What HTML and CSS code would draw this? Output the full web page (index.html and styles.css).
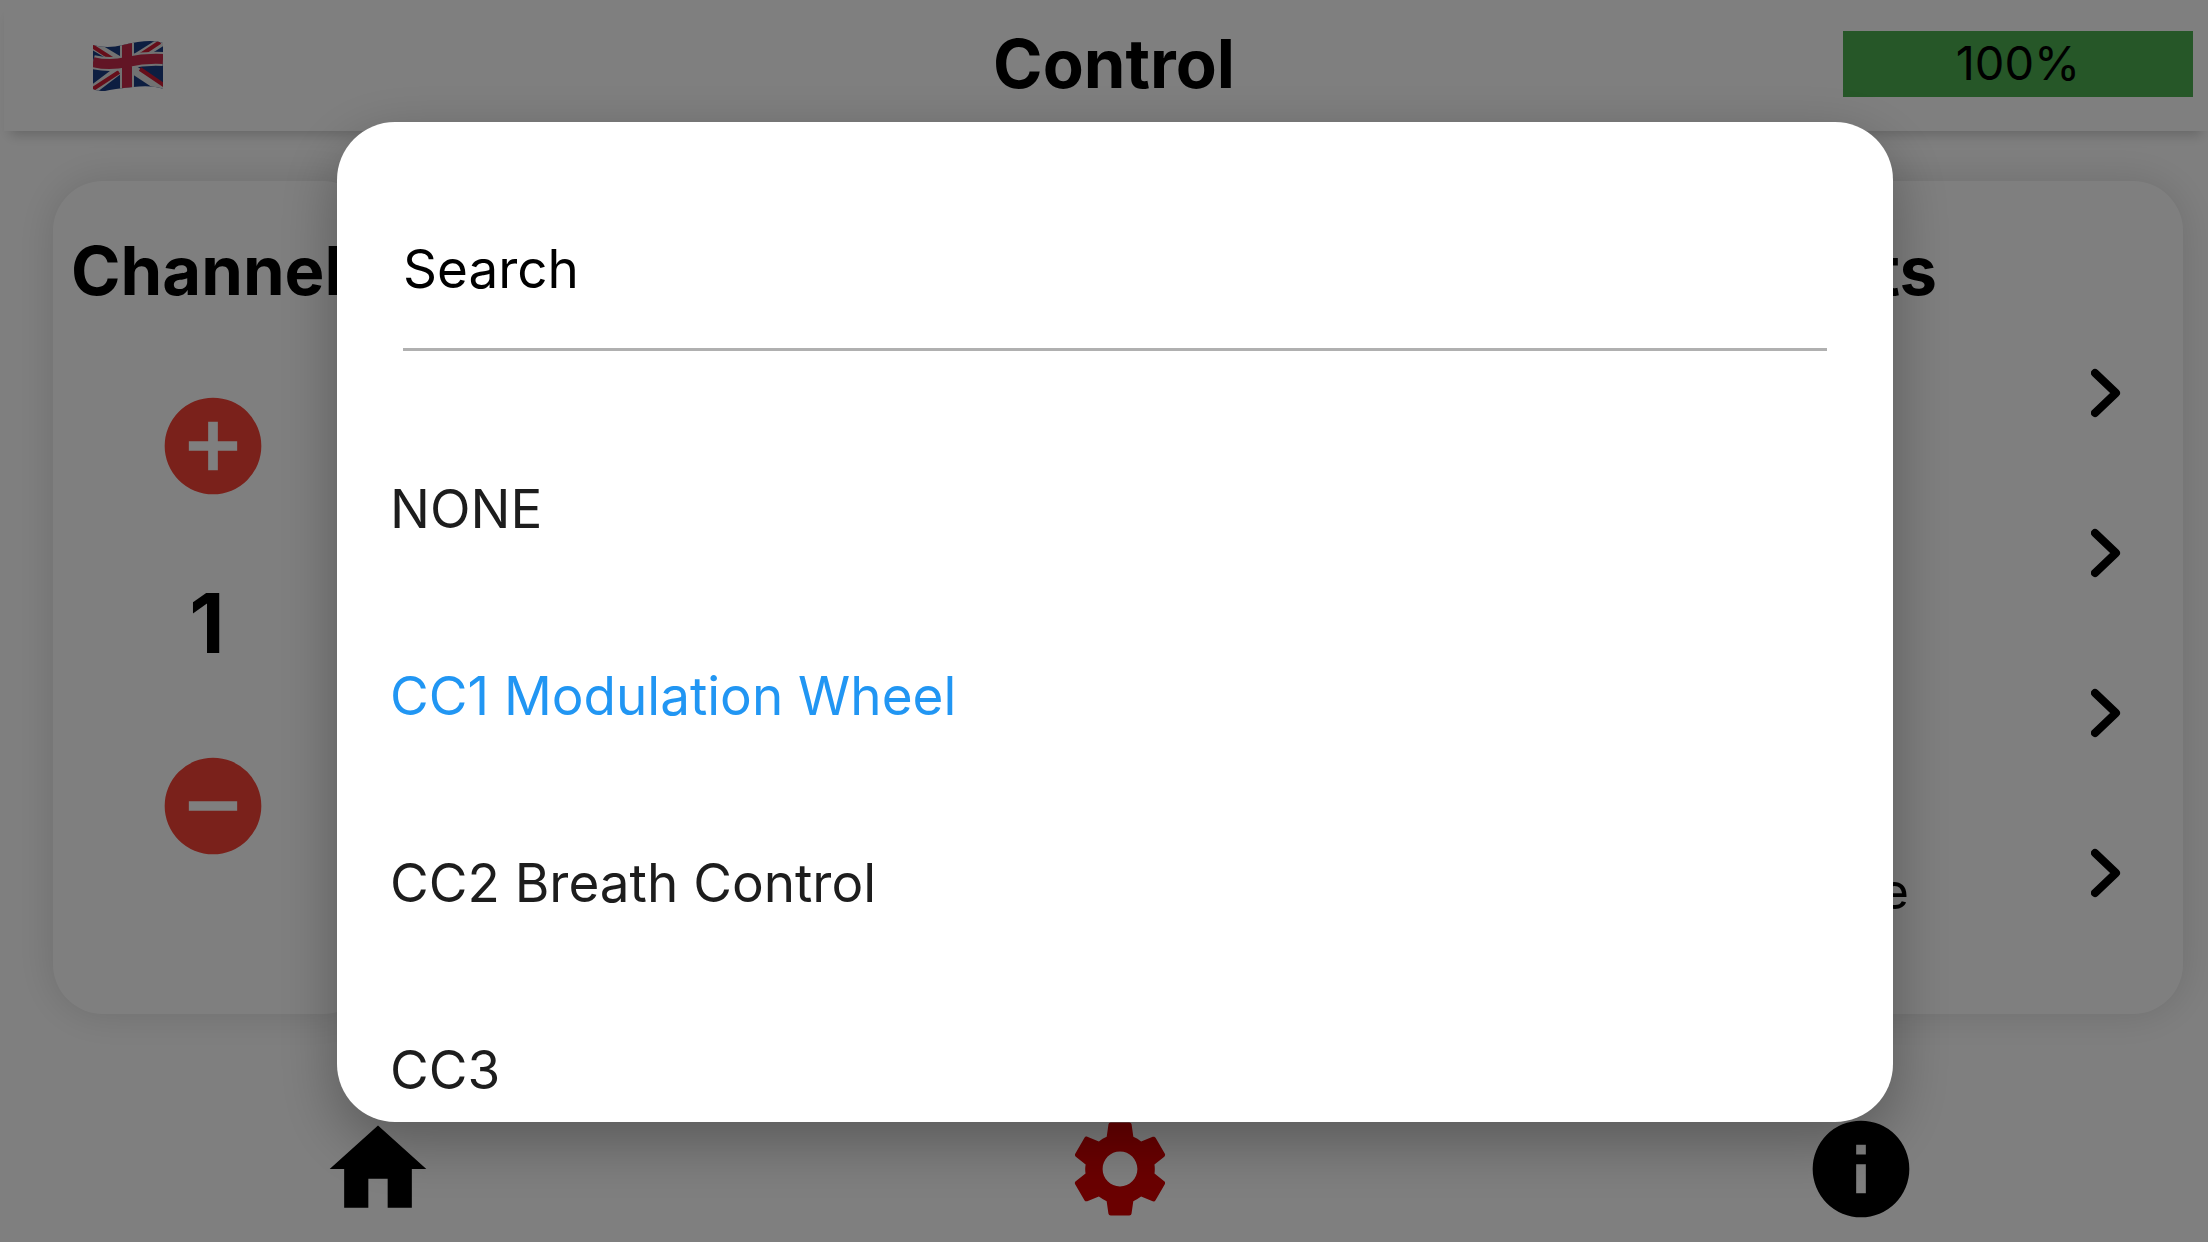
FILE: index.html
```html
<!DOCTYPE html>
<html lang="en">
<head>
<meta charset="utf-8">
<meta name="viewport" content="width=device-width, initial-scale=1">
<title>Control</title>
<link rel="stylesheet" href="styles.css">
</head>
<body>
<div class="app">
  <header class="topbar">
    <button class="language" type="button" aria-label="Language: English">
      <svg class="flag" viewBox="0 0 70 50" aria-hidden="true">
        <defs>
          <clipPath id="cloth"><path d="M0 4Q14 8 30 4T57 0Q65 0 70 2V48Q60 44 40 46T12 50Q4 50 0 48Z"/></clipPath>
        </defs>
        <g clip-path="url(#cloth)">
          <rect width="70" height="50" fill="#1b3c82"/>
          <path d="M-2 3L35 25L70 48M-2 50L35 22L70 0" stroke="#e4e4e4" stroke-width="9" fill="none"/>
          <path d="M-1 5L21 19M0 48L26 31M43 17L67 1M47 28L72 45" stroke="#cc1c34" stroke-width="4"/>
          <path d="M0 21Q16 25 34 21T70 18M34 0V50" stroke="#e4e4e4" stroke-width="14" fill="none"/>
          <path d="M0 21Q16 25 34 21T70 18M34 0V50" stroke="#c42a4a" stroke-width="10" fill="none"/>
        </g>
      </svg>
    </button>
    <h1 class="title">Control</h1>
    <div class="battery">100%</div>
  </header>

  <main class="cards">
    <section class="card channel">
      <h2 class="card-title">Channel</h2>
      <div class="stepper">
        <button class="step" type="button" aria-label="Next channel">
          <svg class="icon" viewBox="0 0 24 24" aria-hidden="true"><path d="M12 2a10 10 0 1 0 0 20 10 10 0 0 0 0-20zm5 11h-4v4h-2v-4H7v-2h4V7h2v4h4z"/></svg>
        </button>
        <output class="value">1</output>
        <button class="step" type="button" aria-label="Previous channel">
          <svg class="icon" viewBox="0 0 24 24" aria-hidden="true"><path d="M12 2a10 10 0 1 0 0 20 10 10 0 0 0 0-20zm5 11H7v-2h10z"/></svg>
        </button>
      </div>
    </section>
    <section class="card inputs">
      <h2 class="card-title">Inputs</h2>
      <ul class="rows">
        <li class="row"><button class="open" type="button" aria-label="Open"><svg class="chevron" viewBox="0 0 30 50" aria-hidden="true"><path d="M4 5L25 25L4 45"/></svg></button></li>
        <li class="row"><button class="open" type="button" aria-label="Open"><svg class="chevron" viewBox="0 0 30 50" aria-hidden="true"><path d="M4 5L25 25L4 45"/></svg></button></li>
        <li class="row"><button class="open" type="button" aria-label="Open"><svg class="chevron" viewBox="0 0 30 50" aria-hidden="true"><path d="M4 5L25 25L4 45"/></svg></button></li>
        <li class="row"><span class="row-label">None</span><button class="open" type="button" aria-label="Open"><svg class="chevron" viewBox="0 0 30 50" aria-hidden="true"><path d="M4 5L25 25L4 45"/></svg></button></li>
      </ul>
    </section>
  </main>

  <nav class="tabs">
    <a class="tab" href="#home" aria-label="Home"><svg class="icon" viewBox="0 0 24 24" aria-hidden="true"><path d="M10 20v-6h4v6h5v-8h3L12 3 2 12h3v8z"/></svg></a>
    <a class="tab active" href="#control" aria-label="Control"><svg class="icon" viewBox="0 0 24 24" aria-hidden="true"><path d="M19.14 12.94c.04-.3.06-.61.06-.94 0-.32-.02-.64-.07-.94l2.03-1.58c.18-.14.23-.41.12-.61l-1.92-3.32c-.12-.22-.37-.29-.59-.22l-2.39.96c-.5-.38-1.03-.7-1.62-.94l-.36-2.54c-.04-.24-.24-.41-.48-.41h-3.84c-.24 0-.43.17-.47.41l-.36 2.54c-.59.24-1.13.57-1.62.94l-2.39-.96c-.22-.08-.47 0-.59.22L2.74 8.87c-.12.21-.08.47.12.61l2.03 1.58c-.05.3-.09.63-.09.94s.02.64.07.94l-2.03 1.58c-.18.14-.23.41-.12.61l1.92 3.32c.12.22.37.29.59.22l2.39-.96c.5.38 1.03.7 1.62.94l.36 2.54c.05.24.24.41.48.41h3.84c.24 0 .44-.17.47-.41l.36-2.54c.59-.24 1.13-.56 1.62-.94l2.39.96c.22.08.47 0 .59-.22l1.92-3.32c.12-.22.07-.47-.12-.61l-2.01-1.58zM12 15.6c-1.98 0-3.6-1.62-3.6-3.6s1.62-3.6 3.6-3.6 3.6 1.62 3.6 3.6-1.62 3.6-3.6 3.6z"/></svg></a>
    <a class="tab" href="#about" aria-label="About"><svg class="icon" viewBox="0 0 24 24" aria-hidden="true"><path d="M12 2a10 10 0 1 0 0 20 10 10 0 0 0 0-20zm1 15h-2v-6h2zm0-8h-2V7h2z"/></svg></a>
  </nav>
</div>

<div class="overlay">
  <div class="dialog" role="dialog" aria-modal="true" aria-label="Select a controller">
    <input class="search" type="text" placeholder="Search" aria-label="Search">
    <ul class="options">
      <li><button class="option" type="button">NONE</button></li>
      <li><button class="option selected" type="button">CC1 Modulation Wheel</button></li>
      <li><button class="option" type="button">CC2 Breath Control</button></li>
      <li><button class="option" type="button">CC3</button></li>
    </ul>
  </div>
</div>
</body>
</html>
```
FILE: styles.css
```css
*,
*::before,
*::after {
  box-sizing: border-box;
}

body {
  margin: 0;
  background: #fff;
  color: #000;
  font-family: Inter, "Liberation Sans", sans-serif;
}

button {
  display: block;
  margin: 0;
  padding: 0;
  border: 0;
  background: none;
  color: inherit;
  font: inherit;
}

ul {
  margin: 0;
  padding: 0;
  list-style: none;
}

svg {
  display: block;
}

.app {
  display: flex;
  flex-direction: column;
  height: 100vh;
  overflow: hidden;
}

.topbar {
  display: grid;
  grid-template-columns: 1fr auto 1fr;
  align-items: center;
  height: 131px;
  margin-left: 4px;
  padding: 0 15px 3px 31px;
  box-shadow: 0 10px 12px -6px rgba(0, 0, 0, 0.2);
}

.language {
  justify-self: start;
  margin-left: 58px;
  padding-top: 4px;
}

.flag {
  width: 70px;
  height: 50px;
}

.title {
  margin: 0;
  font-size: 67px;
  font-weight: 700;
  line-height: 80px;
}

.battery {
  justify-self: end;
  width: 350px;
  height: 66px;
  background: #4caf50;
  font-size: 47px;
  font-weight: 400;
  line-height: 64px;
  text-align: center;
}

.cards {
  display: flex;
  flex: 1;
  gap: 40px;
  padding: 50px 25px 0 53px;
}

.card {
  border-radius: 50px;
  background: #fff;
  box-shadow: 0 0 40px rgba(0, 0, 0, 0.14);
}

.channel {
  width: 320px;
  padding: 50px 18px 0;
}

.inputs {
  flex: 1;
  padding: 50px 52px 0;
}

.card-title {
  margin: 0;
  font-size: 67px;
  font-weight: 700;
  line-height: 80px;
}

.inputs .card-title {
  padding-right: 194px;
  text-align: right;
}

.stepper {
  display: flex;
  flex-direction: column;
  align-items: center;
  gap: 74px;
  padding-top: 77px;
}

.icon {
  width: 116px;
  height: 116px;
  fill: currentColor;
}

.step {
  color: #f44336;
}

.value {
  padding: 0 12px 4px 0;
  font-size: 82px;
  font-weight: 700;
  line-height: 92px;
}

.rows {
  padding-top: 2px;
}

.row {
  display: flex;
  align-items: center;
  justify-content: flex-end;
  height: 160px;
}

.row-label {
  padding: 35px 182px 0 0;
  font-size: 50px;
  font-weight: 400;
}

.open {
  padding-right: 10px;
}

.chevron {
  width: 30px;
  height: 50px;
  fill: none;
  stroke: #000;
  stroke-width: 8;
  stroke-linecap: round;
  stroke-linejoin: round;
}

.tabs {
  display: flex;
  justify-content: space-between;
  margin-top: 97px;
  padding: 0 289px 15px 320px;
}

.tab {
  color: #000;
}

.tab.active {
  color: #d50000;
}

.overlay {
  position: fixed;
  inset: 0;
  padding: 122px 315px 120px 337px;
  background: rgba(0, 0, 0, 0.5);
}

.dialog {
  height: 100%;
  padding: 76px 66px 0;
  overflow: hidden;
  border-radius: 58px;
  background: #fff;
  box-shadow: 0 20px 60px rgba(0, 0, 0, 0.3);
}

.search {
  display: block;
  width: 100%;
  height: 153px;
  padding: 0 0 8px;
  border: 0;
  border-bottom: 3px solid #b0b0b0;
  outline: 0;
  background: none;
  font: 400 53px/64px Inter, "Liberation Sans", sans-serif;
}

.search::placeholder {
  color: #000;
  opacity: 1;
}

.options {
  margin: 64px -13px 0;
}

.option {
  width: 100%;
  height: 187px;
  color: #1d1d1d;
  font-size: 53px;
  font-weight: 400;
  text-align: left;
}

.option.selected {
  color: #2196f3;
}
```
